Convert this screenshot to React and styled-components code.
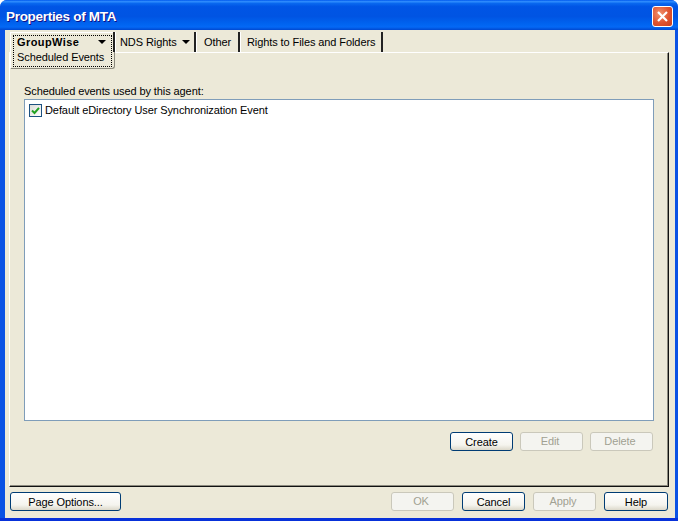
import React from 'react';
import styled, { createGlobalStyle } from 'styled-components';

const Global = createGlobalStyle`
  html, body { margin: 0; padding: 0; background: #fff; }
  #root { width: 678px; height: 521px; }
`;

const Win = styled.div`
  width: 678px; height: 521px; box-sizing: border-box;
  display: flex; flex-direction: column;
  background: #0a52e4;
  box-shadow: inset 0 -3px 0 #0831d9;
  border-radius: 7px 7px 0 0;
  overflow: hidden;
  font-family: "Liberation Sans", Arial, sans-serif;
  font-size: 11px; letter-spacing: -0.09px; color: #000;
`;
const TitleBar = styled.div`
  height: 30px; flex: none; box-sizing: border-box;
  display: flex; align-items: center; justify-content: space-between;
  padding: 3px 5px 0 6px;
  background: linear-gradient(180deg, #0058ee 0%, #3593ff 6%, #0a6af0 10%, #0055e5 22%, #0054e3 55%, #0064f0 80%, #0468f5 90%, #0048d0 100%);
`;
const TitleText = styled.div`
  color: #fff; font: bold 13.5px "Liberation Sans", Arial, sans-serif;
  letter-spacing: -0.3px;
  text-shadow: 1px 1px 0 #0f1089;
`;
const Close = styled.div`
  width: 21px; height: 21px; box-sizing: border-box;
  border: 1px solid #fff; border-radius: 3px;
  background: radial-gradient(circle at 35% 35%, #f0926f, #e0532f 55%, #c8401f);
  display: flex; align-items: center; justify-content: center;
`;
const Body = styled.div`
  flex: 1; min-height: 0; margin: 0 3px 3px 5px;
  background: #ece9d8;
  display: flex; flex-direction: column;
  padding: 0 6px 7px 4px;
`;
const TabRow = styled.div`
  height: 22px; flex: none; display: flex; align-items: flex-start;
  position: relative; z-index: 2;
  padding-left: 1px;
`;
const Tab = styled.div`
  flex: none; box-sizing: border-box; height: 20px; margin-top: 2px;
  width: ${p => p.$w}px;
  display: flex; align-items: center; padding-left: ${p => p.$pl}px;
  border-right: 2px solid #222;
  border-left: 1px solid #fff;
  white-space: nowrap;
`;
const ActiveTab = styled.div`
  flex: none; box-sizing: border-box; width: 105px; height: 37px; margin-top: 2px;
  position: relative;
  background: #ece9d8;
  border-left: 1px solid #fff; border-top: 1px solid #fff;
  border-right: 1px solid #8c8a7e; border-bottom: 1px solid #8c8a7e;
  border-radius: 0 0 3px 0;
  padding: 2px 2px 1px 2px;
  &::after {
    content: ''; position: absolute; top: -1px; right: -1px;
    width: 2px; height: 20px; background: #222;
  }
`;
const Focus = styled.div`
  height: 100%; box-sizing: border-box;
  border: 1px dotted #000;
  padding: 0 5px 3px 3px;
  display: flex; flex-direction: column; justify-content: center;
`;
const Line = styled.div`
  height: 15px; flex: none; display: flex; align-items: center; justify-content: space-between;
  white-space: nowrap;
  font-weight: ${p => (p.$b ? 700 : 400)};
  letter-spacing: ${p => (p.$b ? '0.4px' : 'inherit')};
`;
const Arrow = styled.span`
  display: inline-block; width: 0; height: 0; margin-left: ${p => p.$ml || 0}px;
  border-left: 4px solid transparent; border-right: 4px solid transparent; border-top: 4px solid #000;
`;
const Panel = styled.div`
  flex: 1; min-height: 0; box-sizing: border-box;
  border-left: 1px solid #fff; border-top: 1px solid #fff;
  border-right: 1px solid #111; border-bottom: 1px solid #111;
  box-shadow: inset -1px -1px 0 #8c8a7e;
  padding: 31px 14px 0 14px;
  display: flex; flex-direction: column;
`;
const Label = styled.div`
  height: 15px; line-height: 15px; white-space: nowrap;
`;
const List = styled.div`
  height: 322px; flex: none; box-sizing: border-box;
  background: #fff; border: 1px solid #7f9db9;
  padding: 4px;
`;
const Item = styled.div`
  display: flex; align-items: center; gap: 3px; height: 13px; white-space: nowrap;
`;
const ItemText = styled.span`
  padding-bottom: 2px;
`;
const Check = styled.div`
  width: 13px; height: 13px; box-sizing: border-box;
  border: 1px solid #1c5180;
  background: linear-gradient(135deg, #dcdcd7, #fff);
  display: flex; align-items: center; justify-content: center;
`;
const Actions = styled.div`
  display: flex; justify-content: flex-end; gap: 7px; margin-top: 11px; padding-right: 1px;
`;
const Footer = styled.div`
  flex: none; display: flex; justify-content: space-between; margin-top: 5px; padding: 0 1px;
`;
const Group = styled.div`
  display: flex; gap: 8px;
`;
const Btn = styled.div`
  box-sizing: border-box; height: 19px; width: ${p => p.$w || 63}px;
  border-radius: 3px; border: 1px solid ${p => (p.$off ? '#cac8bb' : '#003c74')};
  background: ${p => (p.$off ? '#f4f4f0' : 'linear-gradient(180deg, #fff 0%, #f5f4ee 70%, #dcd8ca 100%)')};
  color: ${p => (p.$off ? '#a1a192' : '#000')};
  padding: ${p => (p.$off ? '0 3px 2px 0' : '0')};
  display: flex; align-items: center; justify-content: center;
`;

export default function App() {
  return (
    <>
      <Global />
      <Win>
        <TitleBar>
          <TitleText>Properties of MTA</TitleText>
          <Close>
            <svg width="13" height="13" viewBox="0 0 13 13"><path d="M2 2 11 11M11 2 2 11" stroke="#fff" strokeWidth="2.2" /></svg>
          </Close>
        </TitleBar>
        <Body>
          <TabRow>
            <ActiveTab>
              <Focus>
                <Line $b>GroupWise<Arrow /></Line>
                <Line>Scheduled Events</Line>
              </Focus>
            </ActiveTab>
            <Tab $w={81} $pl={4}>NDS Rights<Arrow $ml={5} /></Tab>
            <Tab $w={44} $pl={7}>Other</Tab>
            <Tab $w={143} $pl={6}>Rights to Files and Folders</Tab>
          </TabRow>
          <Panel>
            <Label>Scheduled events used by this agent:</Label>
            <List>
              <Item>
                <Check>
                  <svg width="9" height="9" viewBox="0 0 9 9"><path d="M1 4.5 3.5 7 8 1.8" fill="none" stroke="#21a121" strokeWidth="2" /></svg>
                </Check>
                <ItemText>Default eDirectory User Synchronization Event</ItemText>
              </Item>
            </List>
            <Actions>
              <Btn>Create</Btn>
              <Btn $off>Edit</Btn>
              <Btn $off>Delete</Btn>
            </Actions>
          </Panel>
          <Footer>
            <Btn $w={111}>Page Options...</Btn>
            <Group>
              <Btn $off>OK</Btn>
              <Btn>Cancel</Btn>
              <Btn $off>Apply</Btn>
              <Btn $w={64}>Help</Btn>
            </Group>
          </Footer>
        </Body>
      </Win>
    </>
  );
}
